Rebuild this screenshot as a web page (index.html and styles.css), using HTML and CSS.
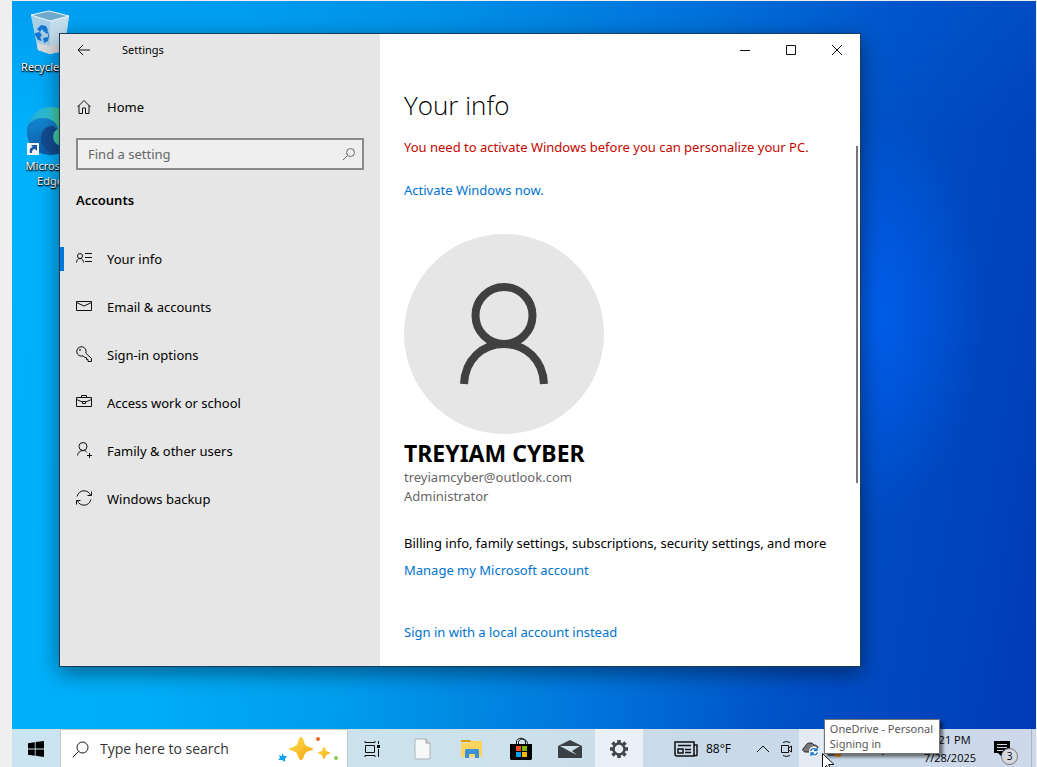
FILE: index.html
```html
<!DOCTYPE html>
<html lang="en">
<head>
<meta charset="utf-8">
<title>Settings - Your info</title>
<link rel="stylesheet" href="styles.css">
</head>
<body>
<main class="desktop">
  <div class="shortcuts">
    <a class="shortcut" href="#recycle">
      <svg width="48" height="48" viewBox="0 0 48 48">
        <path d="M5 7 23 3l20 5-5 35-14 3-12-4z" fill="#b9dcf0"/>
        <path d="M5 7l19 6 19-5-19-5z" fill="#6fa9cc"/>
        <path d="M5 7l19 6v33l-12-4z" fill="#a7cfe6"/>
        <path d="M24 13l19-5-5 35-14 3z" fill="#c5dfee"/>
        <path d="M11 35l13 3 14-3-1 8-13 3-12-4z" fill="#d9dcde"/>
        <path d="M5 7l18-4 20 5-19 5z" fill="none" stroke="#e8f6fd"/>
        <path d="M11 21l4-4 5 1 2 4-4 2-2-3-2 3zM9 25l5-1 2 4-2 1 2 4-4-1-3-5zM17 30l5-1 0-5 1 4-1 5-4 2zM20 20l3 6-4-1z" fill="#1476d2"/>
      </svg>
      <span>Recycle Bin</span>
    </a>
    <a class="shortcut" href="#edge">
      <svg width="48" height="48" viewBox="0 0 48 48">
        <defs>
          <linearGradient id="edgeTop" x1="0" y1="0" x2="1" y2="0"><stop offset="0" stop-color="#1ba6e0"/><stop offset=".5" stop-color="#35c6cf"/><stop offset=".8" stop-color="#5bd85a"/></linearGradient>
          <linearGradient id="edgeLow" x1="0" y1="0" x2="0" y2="1"><stop offset="0" stop-color="#1387d4"/><stop offset="1" stop-color="#0c59a4"/></linearGradient>
        </defs>
        <circle cx="25" cy="24" r="24" fill="url(#edgeTop)"/>
        <path d="M1 22C2 15 9 11 17 11c9 0 14 5 15 11l-3 2c-5 8 2 18 14 15-5 7-12 9-18 9C11 48 0 38 1 22z" fill="url(#edgeLow)"/>
        <path d="M27 19c-9 0-13 7-12 14 1 8 8 14 15 14 6 0 11-3 13-8-10 3-17-3-16-10 0-4 2-5 4-7z" fill="#124c91"/>
      </svg>
      <svg class="link-mark" width="12" height="12" viewBox="0 0 12 12"><path d="M0 0h12v12H0z" fill="#f5f5f5"/><path d="M3 10C2 6 4 4 6 4L4 2h6v6L8 6c-2 0-3 1-3 4z" fill="#1858a8"/></svg>
      <span>Microsoft Edge</span>
    </a>
  </div>

  <section class="window" aria-label="Settings">
    <aside class="sidebar">
      <header class="titlebar">
        <button class="back" aria-label="Back"><svg width="14" height="12" viewBox="0 0 14 12"><path d="M13 6H1M6 1L1 6l5 5"/></svg></button>
        <span class="app-name">Settings</span>
      </header>
      <a class="nav-item home" href="#home">
        <svg width="16" height="16" viewBox="0 0 16 16"><path d="M1.500 8L8 1.500 14.500 8M3 6.500v8h3.500V9h3v5.500H13v-8"/></svg>
        <span>Home</span>
      </a>
      <label class="find">
        <input type="text" placeholder="Find a setting" aria-label="Find a setting">
        <svg width="14" height="14" viewBox="0 0 14 14"><circle cx="8.500" cy="5.500" r="4"/><path d="M5.500 8.500L1 13"/></svg>
      </label>
      <h2>Accounts</h2>
      <nav>
        <a class="nav-item current" href="#info"><svg width="16" height="16" viewBox="0 0 16 16"><circle cx="4" cy="6" r="2.500"/><path d="M.5 12.500C.7 10 2 8.500 4 8.500s3.300 1.500 3.500 4M9 3.500h7M9 7.500h7M9 11.500h7"/></svg><span>Your info</span></a>
        <a class="nav-item" href="#email"><svg width="16" height="16" viewBox="0 0 16 16"><path d="M.5 3.500h15v9H.5zM.5 4.500L8 8l7.500-3.500"/></svg><span>Email &amp; accounts</span></a>
        <a class="nav-item" href="#signin"><svg width="16" height="16" viewBox="0 0 16 16"><path d="M9.800 7.200l5.700 5.300v3H12v-2h-1.500v-2H8.700L7.200 9.800A4.700 4.700 0 1 1 9.800 7.200z"/><circle cx="4" cy="4" r=".5"/></svg><span>Sign-in options</span></a>
        <a class="nav-item" href="#work"><svg width="16" height="16" viewBox="0 0 16 16"><path d="M.5 3.500h15v9H.5zM5.500 3.500v-2h5v2M.5 5.500L6.500 8M9.500 8l6-2.500M6.500 7.500h3v2h-3z"/></svg><span>Access work or school</span></a>
        <a class="nav-item" href="#family"><svg width="16" height="16" viewBox="0 0 16 16"><circle cx="7" cy="4.500" r="4"/><path d="M1.500 13.500C2 10.500 4 8.500 7 8.500c2 0 3 .7 4 2M13.500 11v5M11 13.500h5"/></svg><span>Family &amp; other users</span></a>
        <a class="nav-item" href="#backup"><svg width="16" height="16" viewBox="0 0 16 16"><path d="M1 6.500C2 3 4.500 .8 8 .8c3 0 5.500 1.700 6.700 4.700M15.500 1.500v4h-4M15 9.500c-1 3.500-3.500 5.700-7 5.700-3 0-5.500-1.700-6.700-4.700M.5 14.500v-4h4"/></svg><span>Windows backup</span></a>
      </nav>
    </aside>

    <article class="content">
      <header class="titlebar controls">
        <button aria-label="Minimize"><svg width="11" height="11" viewBox="0 0 11 11"><path d="M0 5.500h10"/></svg></button>
        <button aria-label="Maximize"><svg width="11" height="11" viewBox="0 0 11 11"><path d="M.5 .5h9v9h-9z"/></svg></button>
        <button aria-label="Close"><svg width="11" height="11" viewBox="0 0 11 11"><path d="M0 0l10 10M10 0L0 10"/></svg></button>
      </header>
      <div class="page">
        <h1>Your info</h1>
        <p class="warning">You need to activate Windows before you can personalize your PC.</p>
        <p class="activate"><a href="#activate">Activate Windows now.</a></p>
        <svg class="avatar" width="200" height="200" viewBox="0 0 200 200" role="img" aria-label="Profile picture">
          <circle cx="100" cy="100" r="100" fill="#e6e6e6"/>
          <g fill="none" stroke="#404040" stroke-width="8"><circle cx="100" cy="81.500" r="28.500"/><path d="M60 150c1-24 18-40 40-40s39 16 40 40"/></g>
        </svg>
        <p class="name">TREYIAM CYBER</p>
        <p class="detail">treyiamcyber@outlook.com</p>
        <p class="detail">Administrator</p>
        <p class="billing">Billing info, family settings, subscriptions, security settings, and more</p>
        <p class="manage"><a href="#manage">Manage my Microsoft account</a></p>
        <p class="local"><a href="#local">Sign in with a local account instead</a></p>
      </div>
      <div class="scroll-thumb"></div>
    </article>
  </section>
</main>

<footer class="taskbar">
  <button class="task start" aria-label="Start"><svg width="16" height="16" viewBox="0 0 16 16"><path d="M0 2.200l6.800-1v6.300H0zM7.600 1.100L16 0v7.500H7.600zM0 8.400h6.800v6.300L0 13.800zM7.600 8.400H16V16l-8.400-1.200z"/></svg></button>
  <label class="search">
    <svg width="17" height="17" viewBox="0 0 17 17"><circle cx="10.500" cy="6.500" r="5.500"/><path d="M6.500 10.500L.8 16.200"/></svg>
    <input type="text" placeholder="Type here to search" aria-label="Type here to search">
    <svg class="sparkles" width="62" height="26" viewBox="0 0 62 26">
      <defs><linearGradient id="gold" x1="0" y1="0" x2="1" y2="1"><stop offset="0" stop-color="#ffe052"/><stop offset="1" stop-color="#f3a30c"/></linearGradient></defs>
      <path d="M24 1q2 0 3 5 1 4 5 5 4 1 4 2t-4 2q-4 1-5 5-1 4-3 4t-3-4q-1-4-5-5-4-1-4-2t4-2q4-1 5-5 1-5 3-5z" fill="url(#gold)"/>
      <path d="M47 11q1 0 2 4 4 1 4 2t-4 2q-1 4-2 4t-2-4q-4-1-4-2t4-2q1-4 2-4z" fill="url(#gold)"/>
      <path d="M5 17l2 3 3 0-2 3 0 3-3-2-4 0 2-2-1-3 3 1z" fill="#10a5ee"/>
      <circle cx="41" cy="3" r="2" fill="#f0662e"/><circle cx="59" cy="22" r="2" fill="#8bc94a"/>
    </svg>
  </label>
  <button class="task view" aria-label="Task View"><svg width="17" height="16" viewBox="0 0 17 16"><path d="M1.500 4.500h9v7h-9zM1 0v1.500h10V0M1 16v-1.500h10V16M14.500 0v3M14.500 8v8" fill="none" stroke="#111"/><path d="M13 4h3v3h-3z"/></svg></button>
  <div class="apps">
    <button class="task" aria-label="Document"><svg width="18" height="22" viewBox="0 0 18 22"><path d="M1 1h11l4 4v16H1z" fill="#f7f8f8" stroke="#aeb4b8"/><path d="M12 1v4h4" fill="#ddd" stroke="#949a9f"/></svg></button>
    <button class="task" aria-label="File Explorer"><svg width="22" height="20" viewBox="0 0 22 20"><path d="M0 1h9l2 2H0z" fill="#d99a00"/><path d="M0 4h8l2-2h11v16H0z" fill="#ffd45c"/><path d="M4 19v-8l1-1h12l1 1v8h-4v-4H8v4z" fill="#3b91d8"/></svg></button>
    <button class="task" aria-label="Microsoft Store"><svg width="24" height="24" viewBox="0 0 24 24"><path d="M7.500 7V5c0-5 9-5 9 0v2M9.500 7V5.500c0-5 9-4 9 1V7" fill="none" stroke="#111"/><path d="M1 7h22v15l-1 1H2l-1-1z"/><path d="M7 9h5v5H7z" fill="#f25022"/><path d="M13 9h5v5h-5z" fill="#7fba00"/><path d="M7 15h5v5H7z" fill="#00a4ef"/><path d="M13 15h5v5h-5z" fill="#ffb900"/></svg></button>
    <button class="task" aria-label="Mail"><svg width="24" height="20" viewBox="0 0 24 20"><path d="M0 7l12-6 12 6v12H0z" fill="#3b4045"/><path d="M2 7h20l-8 5 5 4-8-4z" fill="#cfe0ea"/></svg></button>
    <button class="task active" aria-label="Settings"><svg width="18" height="18" viewBox="0 0 18 18" fill="none" stroke="#3f4449"><circle cx="9" cy="9" r="5.500" stroke-width="2.500"/><path d="M9 0v3M9 15v3M0 9h3M15 9h3M2.500 2.500l2 2M13.500 13.500l2 2M2.500 15.500l2-2M13.500 4.500l2-2" stroke-width="3.500"/></svg></button>
  </div>
  <div class="tray">
    <button class="weather"><svg width="24" height="17" viewBox="0 0 24 17" fill="none" stroke="#111" stroke-width="1.500"><path d="M1 1h19v14H3c-1 0-2-1-2-2zM20 4h3v10c0 1-3 1-3-1M4 4.500h13M4 8h5v4H4zM11 8.500h6M11 11.500h6"/></svg><span>88°F</span></button>
    <button class="tray-icon" aria-label="Show hidden icons"><svg width="14" height="8" viewBox="0 0 14 8"><path d="M1 7l6-6 6 6"/></svg></button>
    <button class="tray-icon" aria-label="Meet Now"><svg width="14" height="18" viewBox="0 0 14 18"><path d="M1.500 5.500h7v7h-7zM8.500 8l3-2v6l-3-2M3 2.500q3-2 7 0M3 15.500q3 2 7 0"/></svg></button>
    <button class="tray-icon hover" aria-label="OneDrive"><svg width="18" height="16" viewBox="0 0 18 16"><path d="M4 11C0 11 0 7 3 6c1-5 8-5 9-2 2 0 4 1 4 3l-7 4z" fill="#777" stroke="#222"/><circle cx="12" cy="10.500" r="5" fill="#fff" stroke="none"/><path d="M8.500 10c1-3 5-3 6-1M15 6.500v3h-3M15.500 11.500c-1 3-5 3-6 1M9 15v-3h3" stroke="#1673c5" stroke-width="1.300"/></svg></button>
    <button class="tray-icon" aria-label="Security"><svg width="18" height="18" viewBox="0 0 18 18"><path d="M2 3h7v12H2z"/><circle cx="12" cy="13" r="4" fill="#f7941d" stroke="none"/></svg></button>
    <button class="tray-icon" aria-label="Network"><svg width="14" height="8" viewBox="0 0 14 8"><path d="M1 1h12v6H1z"/></svg></button>
    <button class="tray-icon" aria-label="Volume muted"><svg width="16" height="16" viewBox="0 0 16 16"><path d="M1 6h3l4-4v12l-4-4H1zM10 9l4 4M14 9l-4 4"/></svg></button>
    <button class="tray-icon" aria-label="Pen"><svg width="16" height="12" viewBox="0 0 16 12"><path d="M4 11l9-9M10 10l4-1"/></svg></button>
    <button class="clock"><span>1:21 PM</span><span>7/28/2025</span></button>
    <button class="notices" aria-label="3 new notifications"><svg width="17" height="17" viewBox="0 0 17 17"><path d="M0 0h16v12H8v4l-4-4H0z"/><path d="M3 3.500h10M3 6.500h10M3 9.500h6" stroke="#cdd8ea"/></svg><span class="badge">3</span></button>
    <button class="show-desktop" aria-label="Show desktop"></button>
  </div>
  <div class="tooltip" role="tooltip">OneDrive - Personal<br>Signing in</div>
  <svg class="cursor" width="13" height="20" viewBox="0 0 13 20"><path d="M.5 .5v16l4-4 3 6 2-1-3-6h5.500z" fill="#fff" stroke="#111"/></svg>
</footer>
</body>
</html>
```

FILE: styles.css
```css
* { box-sizing: border-box; }

body {
  margin: 0;
  height: 100vh;
  padding: 1px 1px 0 12px;
  display: flex;
  flex-direction: column;
  overflow: hidden;
  background: #efefef;
  color: #000;
  font: 13px/20px "Noto Sans", "Open Sans", sans-serif;
}

h1, h2, p { margin: 0; font-weight: 400; }
button, input { font: inherit; color: inherit; }
button { padding: 0; border: 0; background: none; }
a { color: #0073cf; text-decoration: none; }
svg { display: block; flex: none; }

/* Desktop */
.desktop {
  position: relative;
  flex: 1;
  min-height: 0;
  overflow: hidden;
  background:
    radial-gradient(ellipse 110px 200px at 84% 43%, rgba(0, 98, 245, .8), rgba(0, 84, 220, 0)),
    linear-gradient(99deg, #00b1fb 0%, #00aef8 20%, #009ded 38%, #0076dc 60%, #0050c6 78%, #003bb5 100%);
}
.desktop::before {
  content: "";
  position: absolute;
  inset: 0;
  background: linear-gradient(180deg, rgba(0, 100, 215, .25), rgba(0, 100, 215, 0) 18%);
}

.shortcuts {
  position: relative;
  display: grid;
  gap: 33px;
  width: 76px;
  padding-top: 7px;
}
.shortcut {
  position: relative;
  display: flex;
  flex-direction: column;
  align-items: center;
  gap: 3px;
  color: #fff;
  font-size: 11px;
  line-height: 15px;
  text-align: center;
  text-shadow: 1px 1px 2px #000, 0 1px 1px #000;
}
.link-mark { position: absolute; top: 36px; left: 15px; }

/* Settings window */
.window {
  position: absolute;
  inset: 32px 175px 62px 47px;
  display: grid;
  grid-template-columns: 320px 1fr;
  border: 1px solid #183c5c;
  background: #fff;
  box-shadow: 0 6px 20px rgba(0, 0, 0, .45);
}
.titlebar { display: flex; align-items: center; height: 32px; }
.sidebar { background: #e6e6e6; }
.back {
  display: grid;
  place-items: center;
  width: 48px;
  height: 32px;
}
.app-name { padding-left: 14px; font-size: 11px; }

.titlebar svg, .nav-item svg, .find svg, .search > svg, .tray-icon svg {
  fill: none;
  stroke: #111;
}

.nav-item {
  position: relative;
  display: flex;
  align-items: center;
  gap: 15px;
  height: 48px;
  padding-left: 16px;
  color: #000;
}
.home { margin-top: 17px; }
nav .nav-item svg { margin-bottom: 2px; }
.current::before {
  content: "";
  position: absolute;
  left: 0;
  width: 4px;
  height: 24px;
  background: #0078d7;
}

.find {
  display: flex;
  align-items: center;
  height: 32px;
  margin: 7px 16px 0;
  padding: 0 6px 0 10px;
  border: 2px solid #8a8a8a;
  background: #efefef;
}
.find svg { stroke: #666; }
.find input, .search input {
  flex: 1;
  min-width: 0;
  padding: 0;
  border: 0;
  outline: 0;
  background: none;
}
.find input::placeholder { color: #666; opacity: 1; }
.sidebar h2 {
  margin: 18px 16px 23px;
  font-size: 13px;
  font-weight: 600;
  line-height: 24px;
}

.content { position: relative; }
.controls { justify-content: flex-end; }
.controls button {
  display: grid;
  place-items: center;
  width: 46px;
  height: 32px;
}
.page { padding: 22px 24px; }
h1 { font-family: "Open Sans", "Noto Sans", sans-serif; font-size: 26px; font-weight: 300; line-height: 34px; }
.warning { margin-top: 15px; color: #c50500; }
.activate { margin-top: 23px; }
.avatar { margin-top: 34px; }
.name { margin-top: 5px; font-size: 23px; font-weight: 700; line-height: 28px; }
.detail { color: #666; line-height: 19px; }
.name + .detail { margin-top: 1px; }
.billing { margin-top: 27px; }
.manage { margin-top: 7px; }
.local { margin-top: 42px; }
.scroll-thumb {
  position: absolute;
  top: 112px;
  right: 2px;
  width: 2px;
  height: 337px;
  background: #767676;
}

/* Taskbar */
.taskbar {
  position: relative;
  display: flex;
  height: 38px;
  background: linear-gradient(90deg, #cbe4f1, #cce1eb 50%, #c9dae9 65%, #cdd8ea);
  font-family: "Open Sans", "Noto Sans", sans-serif;
}
.task {
  display: grid;
  place-items: center;
  width: 48px;
  padding-top: 2px;
}
.search {
  display: flex;
  align-items: center;
  gap: 11px;
  width: 288px;
  padding: 1px 8px 0 11px;
  border: 1px solid #c3c9cc;
  border-bottom: 0;
  background: #fff;
}
.search input { font-size: 14px; }
.search input::placeholder { color: #333; opacity: 1; }
.search .sparkles { stroke: none; }
.apps { display: flex; gap: 1px; margin-left: 3px; }
.active { background: #e9f0f7; }

.tray { display: flex; margin-left: auto; }
.weather {
  display: flex;
  align-items: center;
  gap: 8px;
  padding: 2px 20px 0 0;
  font-size: 12px;
}
.tray-icon {
  display: grid;
  place-items: center;
  width: 24px;
  padding-top: 2px;
}
.hover { background: #e4ebf5; }
.clock {
  display: flex;
  flex-direction: column;
  align-items: center;
  width: 62px;
  padding-top: 2px;
  font-size: 11px;
  line-height: 18px;
}
.notices {
  position: relative;
  width: 50px;
  padding: 2px 0 0 13px;
}
.badge {
  position: absolute;
  top: 19px;
  left: 20px;
  width: 17px;
  height: 17px;
  border: 1px solid #777;
  border-radius: 50%;
  background: #d5d8de;
  font-size: 10px;
  line-height: 15px;
  text-align: center;
}
.show-desktop { width: 5px; border-left: 1px solid #aab5c6; }

.tooltip {
  position: absolute;
  top: -10px;
  right: 96px;
  padding: 1px 6px 2px 5px;
  border: 1px solid #767676;
  background: #fff;
  box-shadow: 3px 3px 3px rgba(0, 0, 0, .5);
  color: #575757;
  font-family: "Noto Sans", "Open Sans", sans-serif;
  font-size: 11px;
  line-height: 15px;
  white-space: nowrap;
}
.cursor { position: absolute; top: 24px; right: 201px; }
```
